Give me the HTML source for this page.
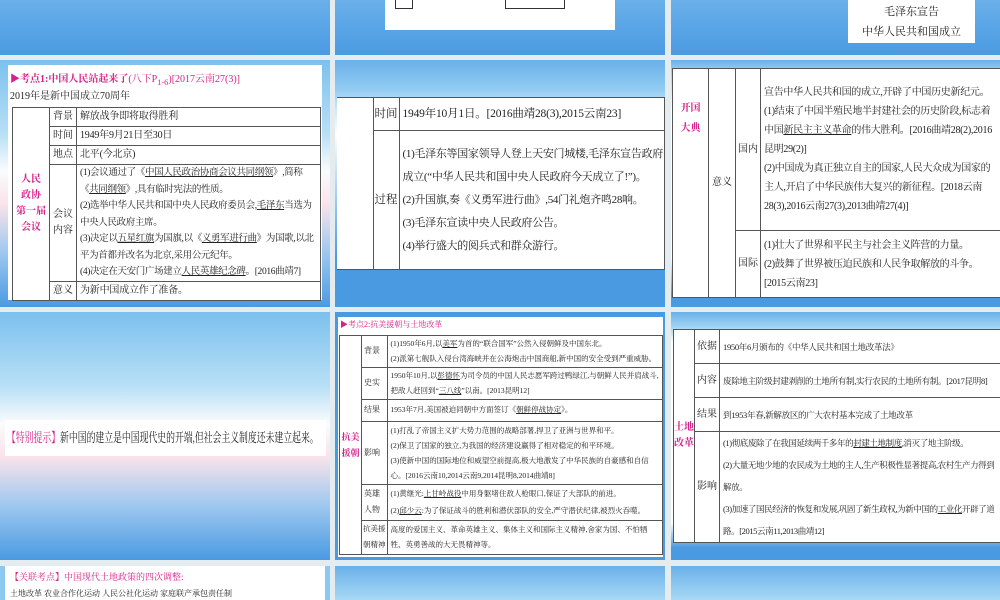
<!DOCTYPE html>
<html><head><meta charset="utf-8"><style>
*{margin:0;padding:0;box-sizing:border-box}
body{width:1000px;height:600px;background:#e4ecf0;position:relative;overflow:hidden;font-family:"Liberation Serif","Noto Serif CJK SC",serif;color:#222}
.s{position:absolute;overflow:hidden;background:linear-gradient(#7cc0ee 0%,#b8e0f6 30%,#fafcfd 45%,#fbe3ea 58%,#9ec8ef 78%,#4a9ae2 100%)}
.b{position:absolute;background:#fff}
.a{position:absolute;font-size:10px;line-height:16px;white-space:nowrap}
.m{color:#d6208a}
table{border-collapse:collapse;position:absolute;background:#fff}
td{border:1px solid #555;font-size:10px;line-height:16px;padding:0 3px;vertical-align:middle;white-space:nowrap}
u{text-decoration:underline}
.c td{letter-spacing:-0.2px}
</style></head><body>
<!-- row1 -->
<div class="s" style="left:0;top:0;width:330px;height:55px;background:linear-gradient(#6ab0ea,#4a9ae2)"></div>
<div class="s" style="left:335px;top:0;width:330px;height:55px;background:linear-gradient(#6ab0ea,#4a9ae2)">
 <div class="b" style="left:50px;top:0;width:230px;height:30px"></div>
 <div style="position:absolute;left:60px;top:0;width:18px;height:9px;border:1px solid #333;border-top:none"></div>
 <div style="position:absolute;left:170px;top:0;width:60px;height:9px;border:1px solid #333;border-top:none"></div>
</div>
<div class="s" style="left:671px;top:0;width:329px;height:55px;background:linear-gradient(#6ab0ea,#4a9ae2)">
 <div class="b" style="left:177px;top:0;width:127px;height:43px;font-size:11px;line-height:20px;text-align:center;padding-top:2px">毛泽东宣告<br>中华人民共和国成立</div>
</div>
<!-- row2 -->
<div class="s" style="left:0;top:60px;width:330px;height:247px">
 <div class="b" style="left:8px;top:5px;width:314px;height:235px"></div>
 <div class="a m" style="left:10px;top:12px;font-weight:bold">▶考点1:中国人民站起来了<span style="font-weight:normal">(八下P<sub>1-6</sub>)[2017云南27(3)]</span></div>
 <div class="a" style="left:10px;top:29px">2019年是新中国成立70周年</div>
 <table class="c" style="left:12px;top:47px;width:309px">
  <tr style="height:19px"><td rowspan="5" class="m" style="width:34px;text-align:center;line-height:16px;font-weight:bold;letter-spacing:0">人民<br>政协<br>第一届<br>会议</td><td style="width:26px;letter-spacing:0">背景</td><td>解放战争即将取得胜利</td></tr>
  <tr style="height:19px"><td style="letter-spacing:0">时间</td><td>1949年9月21日至30日</td></tr>
  <tr style="height:19px"><td style="letter-spacing:0">地点</td><td>北平(今北京)</td></tr>
  <tr><td style="letter-spacing:0">会议<br>内容</td><td style="line-height:16.5px;white-space:normal;font-size:9.5px;letter-spacing:-0.35px">(1)会议通过了《<u>中国人民政治协商会议共同纲领</u>》,简称《<u>共同纲领</u>》,具有临时宪法的性质。<br>(2)选举中华人民共和国中央人民政府委员会,<u>毛泽东</u>当选为中央人民政府主席。<br>(3)决定以<u>五星红旗</u>为国旗,以《<u>义勇军进行曲</u>》为国歌,以北平为首都并改名为北京,采用公元纪年。<br>(4)决定在天安门广场建立<u>人民英雄纪念碑</u>。[2016曲靖7]</td></tr>
  <tr style="height:19px"><td style="letter-spacing:0">意义</td><td>为新中国成立作了准备。</td></tr>
 </table>
</div>
<div class="s" style="left:335px;top:60px;width:330px;height:247px;background:linear-gradient(#6ab0ea,#92ccf2 12%,#cce8f8 20%,#fff 30%,#4a9ae2 80%)">
 <table style="left:2px;top:37px;width:328px;height:173px">
  <tr style="height:33px"><td rowspan="2" style="width:36px;border-left:none"></td><td style="width:25px;font-size:11.5px;padding:0 1px">时间</td><td style="font-size:11.5px;letter-spacing:-0.2px">1949年10月1日。[2016曲靖28(3),2015云南23]</td></tr>
  <tr><td style="font-size:11.5px;padding:0 1px">过程</td><td style="font-size:11px;letter-spacing:-0.3px;line-height:23px;white-space:normal;padding-right:1px">(1)毛泽东等国家领导人登上天安门城楼,毛泽东宣告政府成立(“中华人民共和国中央人民政府今天成立了!”)。<br>(2)升国旗,奏《义勇军进行曲》,54门礼炮齐鸣28响。<br>(3)毛泽东宣读中央人民政府公告。<br>(4)举行盛大的阅兵式和群众游行。</td></tr>
 </table>
</div>
<div class="s" style="left:671px;top:60px;width:329px;height:247px;background:linear-gradient(#6ab0ea,#a0d4f4 5%,#fff 20%,#fff 80%,#4a9ae2 95%)">
 <table style="left:1px;top:8px;width:330px;height:230px">
  <tr><td rowspan="2" class="m" style="width:36px;text-align:center;vertical-align:top;padding-top:30px;font-weight:bold;line-height:20px">开国<br>大典</td><td rowspan="2" style="width:27px">意义</td><td style="width:25px;padding:0 2px">国内</td><td style="white-space:normal;line-height:19px;letter-spacing:-0.3px">宣告中华人民共和国的成立,开辟了中国历史新纪元。<br>(1)结束了中国半殖民地半封建社会的历史阶段,标志着中国<u>新民主主义革命</u>的伟大胜利。[2016曲靖28(2),2016昆明29(2)]<br>(2)中国成为真正独立自主的国家,人民大众成为国家的主人,开启了中华民族伟大复兴的新征程。[2018云南28(3),2016云南27(3),2013曲靖27(4)]</td></tr>
  <tr style="height:67px"><td style="padding:0 2px">国际</td><td style="white-space:normal;line-height:19px;letter-spacing:-0.3px">(1)壮大了世界和平民主与社会主义阵营的力量。<br>(2)鼓舞了世界被压迫民族和人民争取解放的斗争。[2015云南23]</td></tr>
 </table>
</div>
<!-- row3 -->
<div class="s" style="left:0;top:312px;width:330px;height:248px">
 <div class="b" style="left:5px;top:108px;width:321px;height:36px"></div>
 <div style="position:absolute;left:7px;top:108px;height:36px;line-height:36px;font-size:13px;white-space:nowrap;transform:scaleX(0.68);transform-origin:0 50%"><span class="m">【特别提示】</span>新中国的建立是中国现代史的开端,但社会主义制度还未建立起来。</div>
</div>
<div class="s" style="left:335px;top:312px;width:330px;height:248px;background:linear-gradient(#4a9ae2,#4a9ae2)">
 <div class="b" style="left:3px;top:5px;width:325px;height:240px"></div>
 <div class="a m" style="left:5px;top:5px;font-size:8px">▶考点2:抗美援朝与土地改革</div>
 <table style="left:4px;top:23px;width:324px;height:220px">
  <tr><td rowspan="6" class="m" style="width:22px;text-align:center;padding:0;font-weight:bold;font-size:9px">抗美<br>援朝</td><td style="width:23px;font-size:8px;padding:0 2px">背景</td><td style="font-size:7.5px;white-space:normal;line-height:15px">(1)1950年6月,以<u>美军</u>为首的“联合国军”公然入侵朝鲜及中国东北。<br>(2)派第七舰队入侵台湾海峡并在公海炮击中国商船,新中国的安全受到严重威胁。</td></tr>
  <tr><td style="font-size:8px;padding:0 2px">史实</td><td style="font-size:7.5px;white-space:normal;line-height:15px">1950年10月,以<u>彭德怀</u>为司令员的中国人民志愿军跨过鸭绿江,与朝鲜人民并肩战斗,把敌人赶回到“<u>三八线</u>”以南。[2013昆明12]</td></tr>
  <tr style="height:22px"><td style="font-size:8px;padding:0 2px">结果</td><td style="font-size:7.5px">1953年7月,美国被迫同朝中方面签订《<u>朝鲜停战协定</u>》。</td></tr>
  <tr><td style="font-size:8px;padding:0 2px">影响</td><td style="font-size:7.5px;white-space:normal;line-height:15px">(1)打乱了帝国主义扩大势力范围的战略部署,捍卫了亚洲与世界和平。<br>(2)保卫了国家的独立,为我国的经济建设赢得了相对稳定的和平环境。<br>(3)使新中国的国际地位和威望空前提高,极大地激发了中华民族的自豪感和自信心。[2016云南10,2014云南9,2014昆明8,2014曲靖8]</td></tr>
  <tr><td style="font-size:8px;padding:0 2px">英雄<br>人物</td><td style="font-size:7.5px;white-space:normal;line-height:17px">(1)黄继光:<u>上甘岭战役</u>中用身躯堵住敌人枪眼口,保证了大部队的前进。<br>(2)<u>邱少云</u>:为了保证战斗的胜利和潜伏部队的安全,严守潜伏纪律,被烈火吞噬。</td></tr>
  <tr><td style="font-size:7.5px;padding:0 1px">抗美援<br>朝精神</td><td style="font-size:7.5px;white-space:normal;line-height:15px">高度的爱国主义、革命英雄主义、集体主义和国际主义精神,舍家为国、不怕牺牲、英勇善战的大无畏精神等。</td></tr>
 </table>
</div>
<div class="s" style="left:671px;top:312px;width:329px;height:248px;background:linear-gradient(#6ab0ea,#a0d4f4 6%,#fff 12%,#fff 85%,#4a9ae2 95%)">
 <table style="left:2px;top:17px;width:330px;height:214px">
  <tr><td rowspan="4" class="m" style="width:18px;padding:0;text-align:center;font-weight:bold">土地<br>改革</td><td style="width:25px;padding:0 2px">依据</td><td style="font-size:8.5px;letter-spacing:-0.3px">1950年6月颁布的《中华人民共和国土地改革法》</td></tr>
  <tr><td style="padding:0 2px">内容</td><td style="font-size:8.5px;letter-spacing:-0.3px">废除地主阶级封建剥削的土地所有制,实行农民的土地所有制。[2017昆明8]</td></tr>
  <tr><td style="padding:0 2px">结果</td><td style="font-size:8.5px;letter-spacing:-0.3px">到1953年春,新解放区的广大农村基本完成了土地改革</td></tr>
  <tr style="height:110px"><td style="padding:0 2px">影响</td><td style="font-size:8.5px;letter-spacing:-0.4px;white-space:normal;line-height:22px;padding-right:6px">(1)彻底废除了在我国延续两千多年的<u>封建土地制度</u>,消灭了地主阶级。<br>(2)大量无地少地的农民成为土地的主人,生产积极性显著提高,农村生产力得到解放。<br>(3)加速了国民经济的恢复和发展,巩固了新生政权,为新中国的<u>工业化</u>开辟了道路。[2015云南11,2013曲靖12]</td></tr>
 </table>
</div>
<!-- row4 -->
<div class="s" style="left:0;top:566px;width:330px;height:34px;background:#8cc8f0">
 <div class="b" style="left:5px;top:0;width:320px;height:34px"></div>
 <div class="a m" style="left:10px;top:3px;font-size:9px">【关联考点】中国现代土地政策的四次调整:</div>
 <div class="a" style="left:10px;top:20px;font-size:8px">土地改革 农业合作化运动 人民公社化运动 家庭联产承包责任制</div>
</div>
<div class="s" style="left:335px;top:566px;width:330px;height:34px;background:linear-gradient(#6ab0ea,#a8d8f4)"></div>
<div class="s" style="left:671px;top:566px;width:329px;height:34px;background:linear-gradient(#6ab0ea,#a8d8f4)"></div>
</body></html>
